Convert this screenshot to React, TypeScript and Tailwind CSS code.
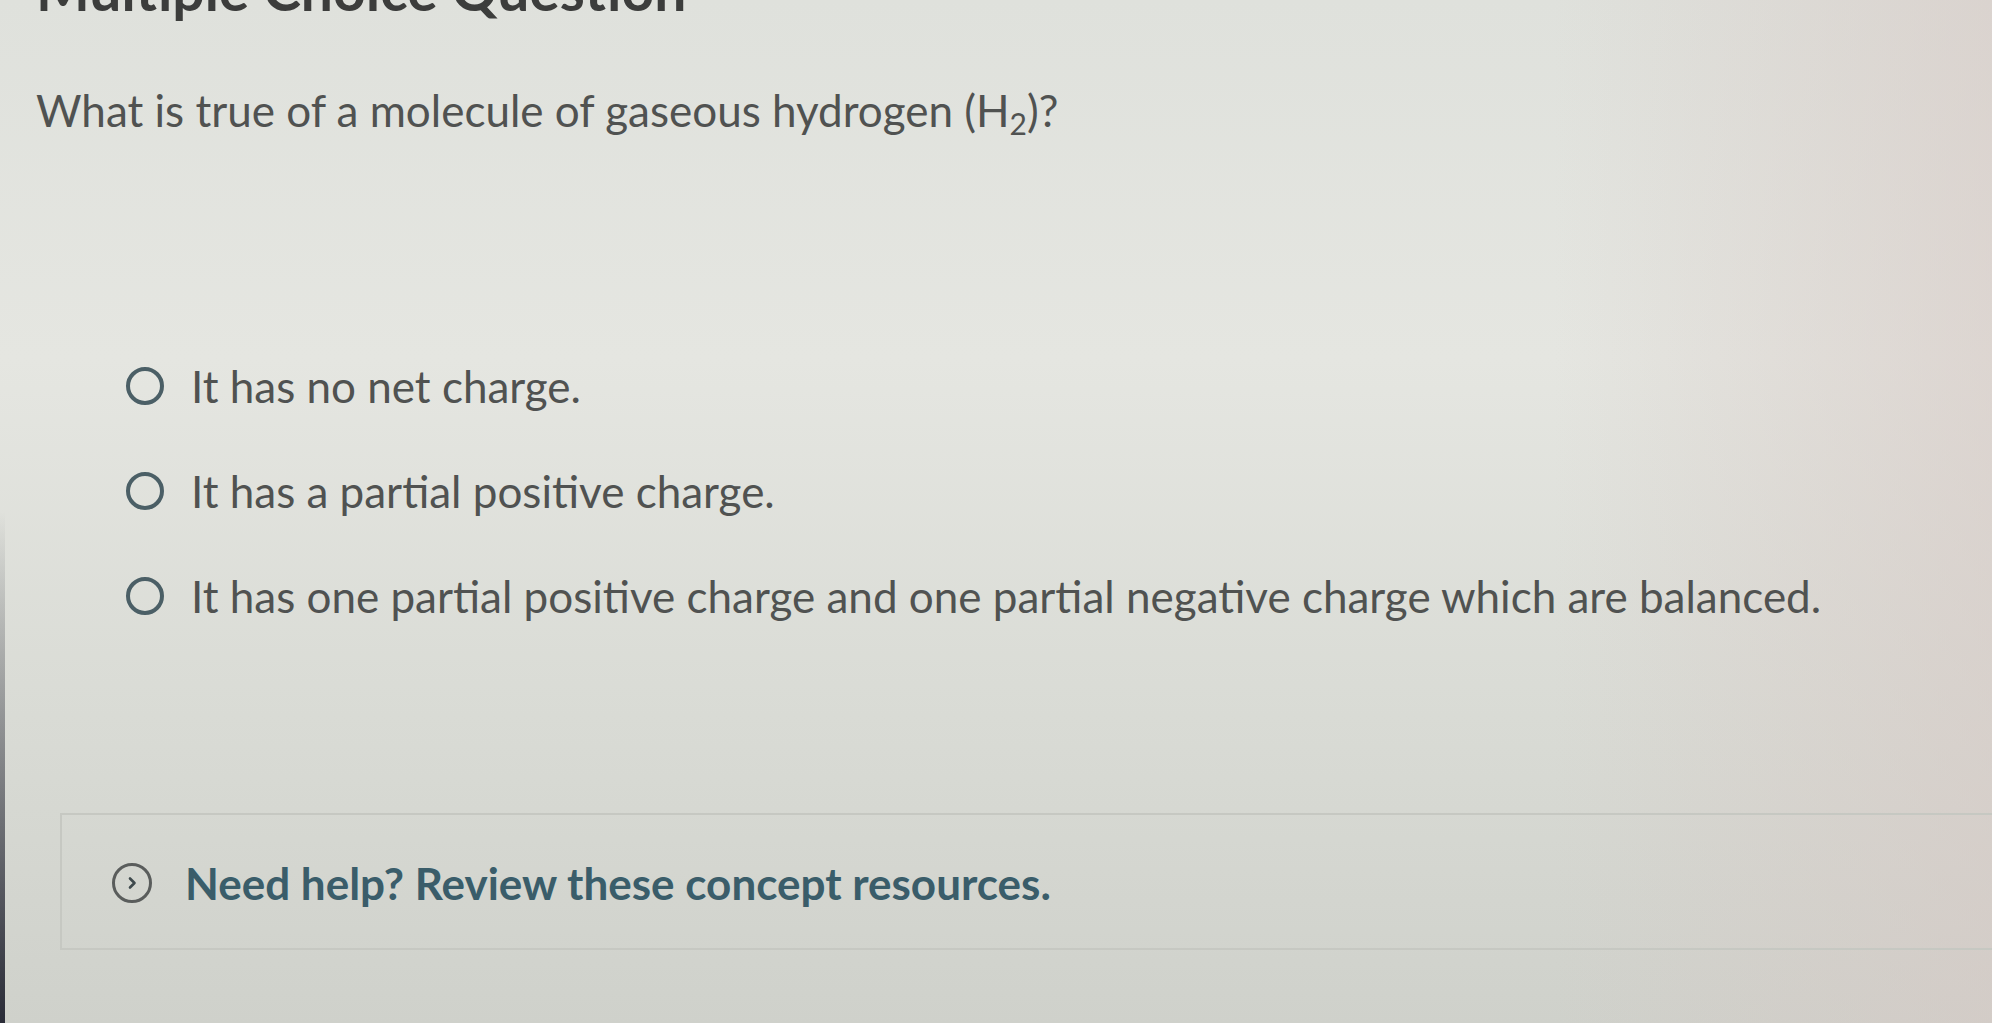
import React from 'react';

const options = [
  'It has no net charge.',
  'It has a partial positive charge.',
  'It has one partial positive charge and one partial negative charge which are balanced.',
];

function Radio() {
  return <span className="block w-[38px] h-[38px] shrink-0 rounded-full border-[4px] border-[#4b5f66]" />;
}

function ChevronCircle() {
  return (
    <span className="flex w-[40px] h-[40px] shrink-0 items-center justify-center rounded-full border-[3px] border-[#5a5d5c]">
      <svg width="16" height="16" viewBox="0 0 16 16" fill="none">
        <path d="M6 3.5 L10.5 8 L6 12.5" stroke="#3f4a4d" strokeWidth="2.6" strokeLinecap="round" strokeLinejoin="round" />
      </svg>
    </span>
  );
}

export default function App() {
  return (
    <div className="flex min-h-screen w-full overflow-hidden font-['Lato','Liberation_Sans',sans-serif] bg-[linear-gradient(90deg,rgba(226,226,222,0)_0%,rgba(226,226,222,0)_78%,rgba(214,200,196,0.55)_100%),linear-gradient(180deg,#dfe1dc_0%,#e5e6e1_35%,#d9dbd5_70%,#cfd1cb_100%)]">
      <div className="w-[5px] shrink-0 bg-linear-to-b from-transparent via-transparent to-[#2a2c38]" />
      <div className="flex flex-1 flex-col pl-[31px]">
        <h1 className="-mt-[39px] text-[57px] font-bold leading-none text-[#3c3d3c]">Multiple Choice Question</h1>

        <p className="mt-[70px] text-[44px] leading-none text-[#505251]">
          What is true of a molecule of gaseous hydrogen (H<sub className="text-[30px] leading-none">2</sub>)?
        </p>

        <div className="mt-[232px] flex flex-col gap-[61px] pl-[90px]">
          {options.map((option) => (
            <label key={option} className="flex items-center gap-[27px]">
              <Radio />
              <span className="text-[44px] leading-none text-[#505251]">{option}</span>
            </label>
          ))}
        </div>

        <div className="mt-[195px] ml-[24px] -mr-[20px] border-y-2 border-l-2 border-[#c6c8c2] pt-[46px] pb-[43px] pl-[50px]">
          <div className="flex items-center gap-[33px]">
            <ChevronCircle />
            <span className="text-[44px] font-bold leading-none text-[#3a5d6a]">
              Need help? Review these concept resources.
            </span>
          </div>
        </div>
      </div>
    </div>
  );
}
